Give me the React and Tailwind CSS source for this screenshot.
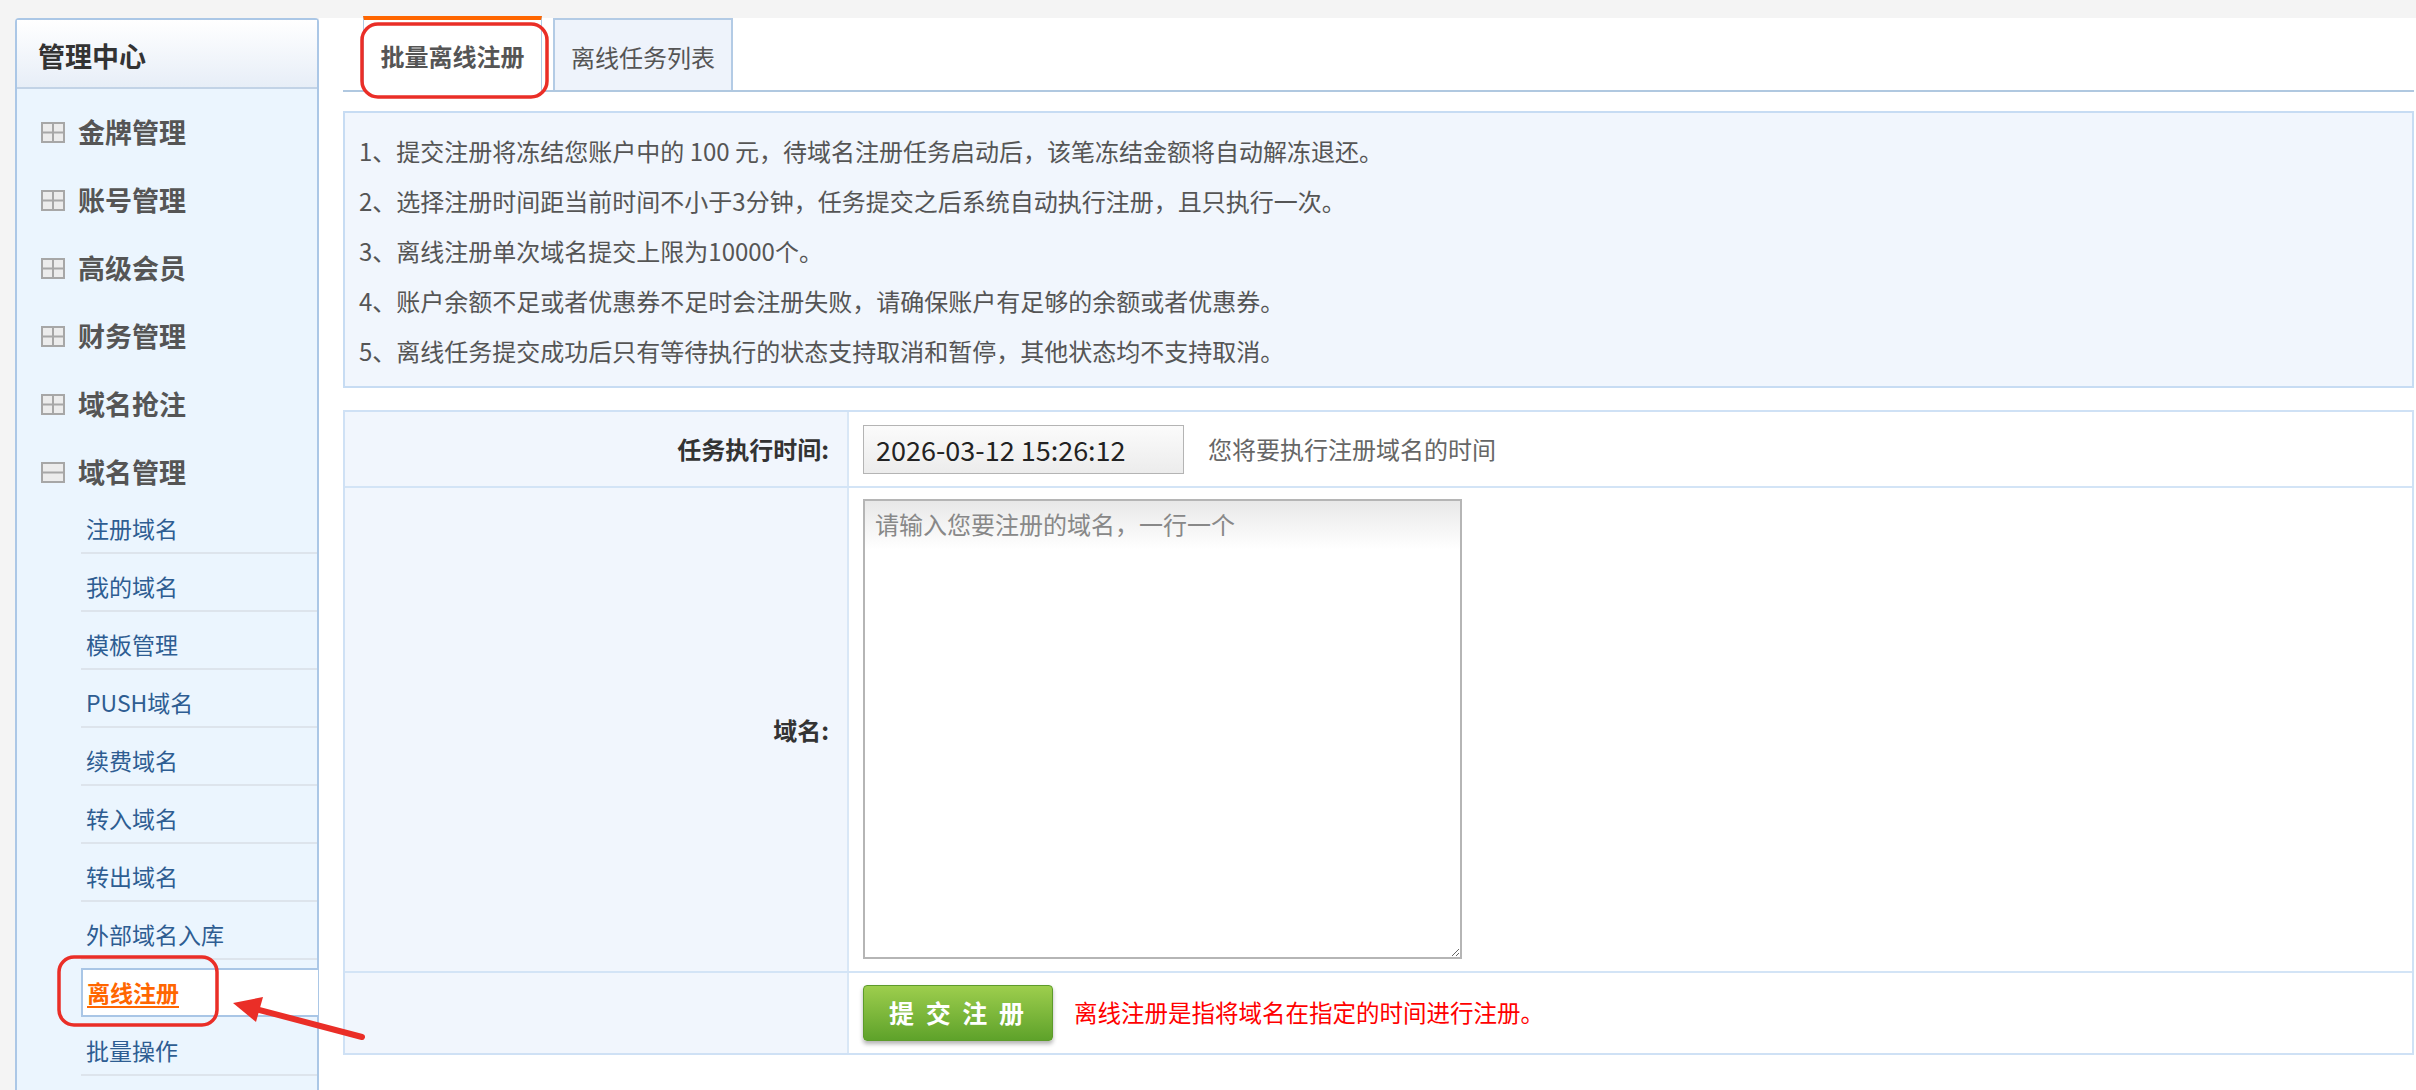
const groups = ["金牌管理", "账号管理", "高级会员", "财务管理", "域名抢注"];

const domainLinks = [
  "注册域名",
  "我的域名",
  "模板管理",
  "PUSH域名",
  "续费域名",
  "转入域名",
  "转出域名",
  "外部域名入库",
];

const notes = [
  "1、提交注册将冻结您账户中的 100 元，待域名注册任务启动后，该笔冻结金额将自动解冻退还。",
  "2、选择注册时间距当前时间不小于3分钟，任务提交之后系统自动执行注册，且只执行一次。",
  "3、离线注册单次域名提交上限为10000个。",
  "4、账户余额不足或者优惠券不足时会注册失败，请确保账户有足够的余额或者优惠券。",
  "5、离线任务提交成功后只有等待执行的状态支持取消和暂停，其他状态均不支持取消。",
];

function GroupIcon({ open = false }) {
  return (
    <svg width="24" height="21" viewBox="0 0 24 21" className="shrink-0">
      <rect x="1" y="1" width="22" height="19" fill="#ececec" stroke="#a7a7a7" strokeWidth="2" />
      {!open && <line x1="12" y1="1" x2="12" y2="20" stroke="#a7a7a7" strokeWidth="2" />}
      <line x1="1" y1="10.5" x2="23" y2="10.5" stroke="#a7a7a7" strokeWidth="2" />
    </svg>
  );
}

function GroupRow({ label, open = false }) {
  return (
    <div className={`flex items-start pl-[24px] pt-[19px] ${open ? "h-[57px]" : "h-[68px]"}`}>
      <div className="flex h-[28px] items-center gap-[13px]">
        <GroupIcon open={open} />
        <span className="text-[27px] font-bold leading-[28px] text-[#555]">{label}</span>
      </div>
    </div>
  );
}

function Sidebar() {
  return (
    <aside className="ml-[15px] w-[304px] shrink-0 rounded-t-[4px] border-2 border-b-0 border-[#abc7e6] bg-[#ebf5fe]">
      <div className="flex h-[69px] items-center border-b-2 border-[#c2d3e6] bg-gradient-to-b from-white to-[#e7eef7] pl-[21px] pt-[6px]">
        <span className="text-[27px] font-bold text-[#333]">管理中心</span>
      </div>
      <div className="pt-[10px]">
        {groups.map((g) => (
          <GroupRow key={g} label={g} />
        ))}
        <GroupRow label="域名管理" open />
        <ul className="ml-[64px]">
          {domainLinks.map((l) => (
            <li
              key={l}
              className="h-[58px] border-b-2 border-[#dde4ec] pl-[5px] pt-[15px] text-[23px] leading-[34px] text-[#2e5d92]"
            >
              {l}
            </li>
          ))}
          <li className="h-[58px] pt-[8px]">
            <div className="-mr-[1px] flex h-[49px] items-center border-2 border-r-0 border-[#a9c6e6] bg-white pl-[4px]">
              <span className="text-[23px] font-bold text-[#ff6600] underline underline-offset-[4px]">
                离线注册
              </span>
            </div>
          </li>
          <li className="h-[58px] border-b-2 border-[#dde4ec] pl-[5px] pt-[15px] text-[23px] leading-[34px] text-[#2e5d92]">
            批量操作
          </li>
        </ul>
      </div>
    </aside>
  );
}

function Tabs() {
  return (
    <div className="flex h-[74px] items-end gap-[11px] border-b-2 border-[#b0c8e0] pl-[20px]">
      <div className="-mb-[2px] flex h-[76px] w-[179px] items-center justify-center border-x border-t-4 border-x-[#aecbe6] border-t-[#ff6600] bg-white">
        <span className="text-[24px] font-bold text-[#555]">批量离线注册</span>
      </div>
      <div className="flex h-[72px] w-[180px] items-center justify-center border-2 border-b-0 border-[#b3cbe5] bg-[#eef3fb] pt-[4px]">
        <span className="text-[24px] text-[#555]">离线任务列表</span>
      </div>
    </div>
  );
}

function Notes() {
  return (
    <div className="mt-[19px] border-2 border-[#c7dcf3] bg-[#f1f6fd] pb-[10px] pl-[14px] pt-[13px]">
      {notes.map((n) => (
        <p key={n} className="text-[24px] leading-[50px] text-[#555]">
          {n}
        </p>
      ))}
    </div>
  );
}

function FormRow({ label, height, top = false, alignTop = false, children }) {
  return (
    <div className={`flex ${top ? "" : "border-t-2 border-[#d3e4f6]"}`}>
      <div
        className={`flex w-[504px] shrink-0 items-center justify-end border-r-2 border-[#d9e7f6] bg-[#f1f6fd] pr-[18px] ${height}`}
      >
        <span className="text-[24px] font-bold text-[#333]">{label}</span>
      </div>
      <div className={`flex flex-1 pl-[14px] ${alignTop ? "items-start pt-[11px]" : "items-center"} ${height}`}>
        {children}
      </div>
    </div>
  );
}

function RegisterForm() {
  return (
    <div className="mt-[22px] border-2 border-[#cfe1f5]">
      <FormRow label="任务执行时间:" height="h-[74px]" top>
        <input
          readOnly
          defaultValue="2026-03-12 15:26:12"
          className="h-[49px] w-[321px] border border-[#b4b4b4] bg-gradient-to-b from-[#fbfbfb] to-[#ececec] pl-[12px] text-[27px] text-[#222] outline-none"
        />
        <span className="ml-[24px] text-[24px] text-[#666]">您将要执行注册域名的时间</span>
      </FormRow>
      <FormRow label="域名:" height="h-[483px]" alignTop>
        <textarea
          placeholder="请输入您要注册的域名，一行一个"
          className="h-[460px] w-[599px] border-2 border-[#b5b5b5] bg-[linear-gradient(to_bottom,#e8e8e8,#ffffff_48px)] px-[10px] py-[6px] text-[24px] leading-[34px] text-[#333] outline-none placeholder:text-[#888]"
        />
      </FormRow>
      <FormRow label="" height="h-[80px]">
        <button className="h-[56px] w-[190px] rounded-[4px] border border-[#5d9b2b] bg-gradient-to-b from-[#9dce4d] to-[#5ea22a] text-[25px] font-bold tracking-[3px] text-white shadow-[0_3px_4px_rgba(0,0,0,0.3)]">
          提 交 注 册
        </button>
        <span className="ml-[21px] text-[23.5px] text-[#ff0000]">离线注册是指将域名在指定的时间进行注册。</span>
      </FormRow>
    </div>
  );
}

export default function App() {
  return (
    <div className="relative flex h-[1090px] w-full overflow-hidden bg-[#f4f4f4] pt-[18px] font-['Noto_Sans_CJK_SC','Noto_Sans',sans-serif]">
      <Sidebar />
      <main className="flex-1 bg-white pl-[24px] pr-[2px]">
        <Tabs />
        <Notes />
        <RegisterForm />
      </main>
      {/* red marks drawn over the screenshot */}
      <svg className="pointer-events-none absolute left-0 top-0" width="2416" height="1090">
        <rect x="362" y="24" width="185" height="73" rx="16" fill="none" stroke="#ea2e27" strokeWidth="3.5" />
        <rect x="59" y="957" width="158" height="68" rx="15" fill="none" stroke="#ea2e27" strokeWidth="3.5" />
        <line x1="362" y1="1037" x2="252" y2="1008" stroke="#ea2e27" strokeWidth="6" strokeLinecap="round" />
        <polygon points="233,1003 263,997 256,1022" fill="#ea2e27" />
      </svg>
    </div>
  );
}
